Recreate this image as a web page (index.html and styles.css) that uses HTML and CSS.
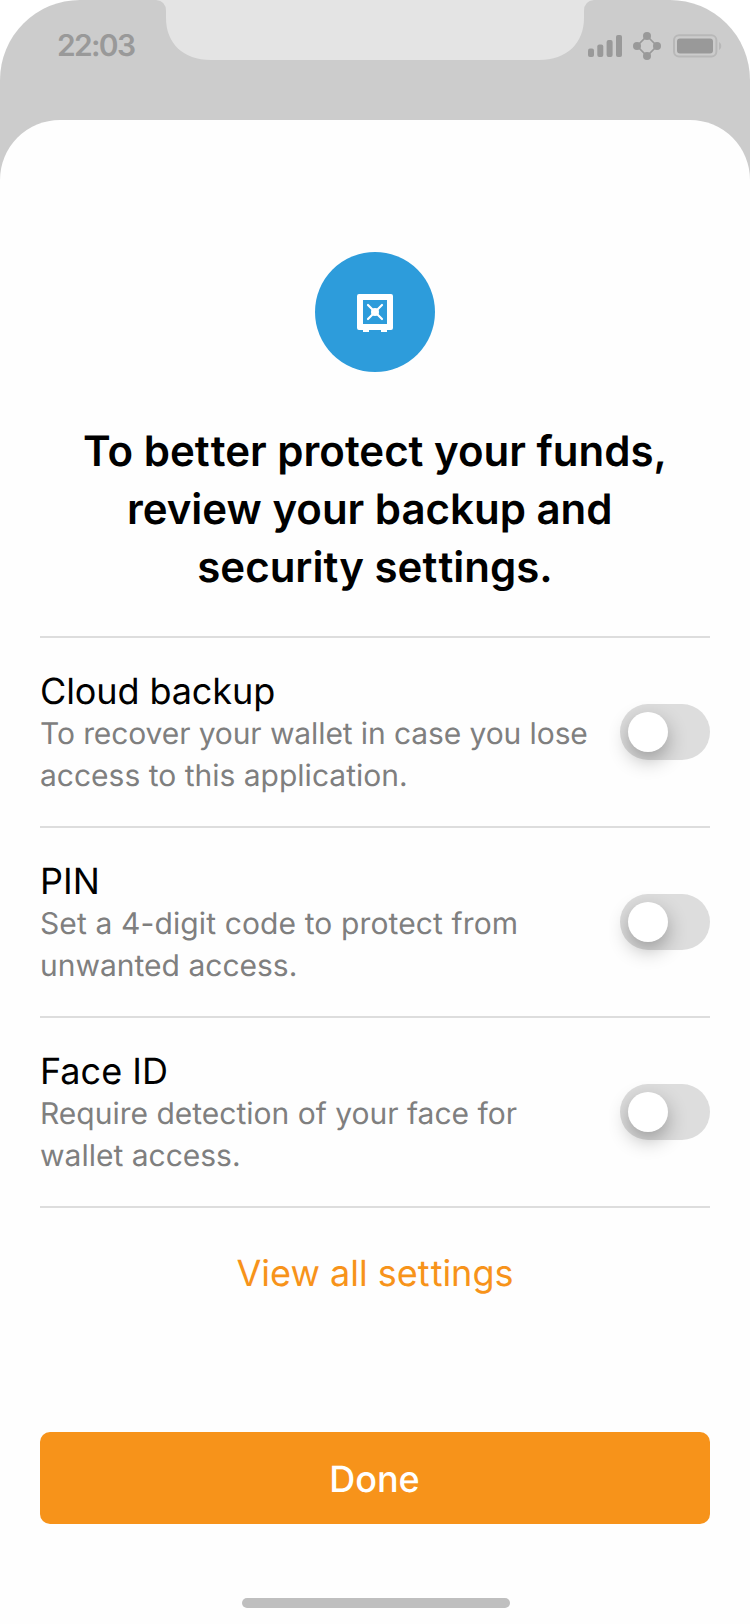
FILE: index.html
```html
<!DOCTYPE html>
<html lang="en">
<head>
<meta charset="utf-8">
<title>Security settings</title>
<link rel="stylesheet" href="styles.css">
</head>
<body>
<div class="phone">
  <header class="status">
    <svg class="notch" width="438" height="60" viewBox="0 0 438 60"><path d="M0 0H438Q428 1 428 11V18C428 43 411 60 383 60H55C27 60 10 43 10 18V11Q10 1 0 0Z"/></svg>
    <span class="time">22:03</span>
    <div class="indicators">
      <svg class="signal" width="34" height="22" viewBox="0 0 34 22"><rect x="0" y="13.5" width="6" height="8.5" rx="2"/><rect x="9.3" y="9.5" width="6" height="12.5" rx="2"/><rect x="18.6" y="5" width="6" height="17" rx="2"/><rect x="28" y="0" width="6" height="22" rx="2"/></svg>
      <svg class="mesh" width="28" height="28" viewBox="0 0 28 28"><path d="M14 4L24 14L14 24L4 14Z"/><circle cx="14" cy="4" r="4"/><circle cx="24" cy="14" r="4"/><circle cx="14" cy="24" r="4"/><circle cx="4" cy="14" r="4"/></svg>
      <svg class="battery" width="49" height="24" viewBox="0 0 49 24"><rect class="case" x="1" y="1.2" width="42.4" height="21.2" rx="5"/><rect x="4" y="4.5" width="36" height="15" rx="3"/><path class="tip" d="M46 8C49 9.500 49 14.500 46 16Z"/></svg>
    </div>
  </header>
  <main class="sheet">
    <div class="badge">
      <svg width="36" height="38" viewBox="0 0 36 38"><path fill-rule="evenodd" d="M2 0H34Q36 0 36 2V34Q36 36 34 36H30V38H24V36H12V38H6V36H2Q0 36 0 34V2Q0 0 2 0ZM6 6V30H30V6Z"/><circle cx="18" cy="18" r="4"/><path class="spokes" d="M11 11L25 25M25 11L11 25"/></svg>
    </div>
    <h1 class="heading">To be<span class="loose">t</span>ter protect your funds,<br>review your backup and&nbsp;<br>security se<span class="loose">t</span>tings.</h1>
    <ul class="settings">
      <li class="setting">
        <div class="text"><h2 class="name tight">Cloud backup</h2><p class="detail"><span class="tight">To recover your wallet in case you lose</span><br>access to this application.</p></div>
        <span class="toggle"><span class="knob"></span></span>
      </li>
      <li class="setting">
        <div class="text"><h2 class="name">PIN</h2><p class="detail"><span class="wide">Set a 4-digit code to protect from</span><br>unwanted access.</p></div>
        <span class="toggle"><span class="knob"></span></span>
      </li>
      <li class="setting">
        <div class="text"><h2 class="name">Face ID</h2><p class="detail">Require detection of your face for<br>wallet access.</p></div>
        <span class="toggle"><span class="knob"></span></span>
      </li>
    </ul>
    <a class="link">View all se<span class="loose">t</span>tings</a>
    <button class="done">Done</button>
    <div class="home"></div>
  </main>
</div>
</body>
</html>
```
FILE: styles.css
```css
* { box-sizing: border-box; margin: 0; padding: 0; }
body { background: #fff; font-family: Inter, "Liberation Sans", sans-serif; text-rendering: geometricPrecision; }
.phone { width: 750px; height: 1624px; background: linear-gradient(#ccc 300px, #fff 300px); border-radius: 80px 80px 0 0; overflow: hidden; }
.status { position: relative; height: 120px; padding: 32px 28px 0 57px; display: flex; justify-content: space-between; align-items: flex-start; }
.notch { position: absolute; top: 0; left: 156px; fill: #e4e4e4; }
.time { font-size: 30px; line-height: 29px; font-weight: 600; color: #999; letter-spacing: -1.7px; }
.indicators { display: flex; align-items: center; fill: #999; }
.mesh { margin-left: 11px; }
.mesh path { fill: none; stroke: #999; stroke-width: 1.6; }
.battery { margin-left: 12px; }
.signal { display: block; }
.case { fill: none; stroke: #b8b8b8; stroke-width: 2; }
.tip { fill: #b8b8b8; }
.sheet { height: 1504px; padding: 132px 40px 0; background: #fefefe; border-radius: 60px 60px 0 0; display: flex; flex-direction: column; }
.badge { width: 120px; height: 120px; padding-top: 2px; border-radius: 50%; background: #2d9cdb; align-self: center; display: flex; align-items: center; justify-content: center; fill: #fff; }
.spokes { stroke: #fff; stroke-width: 2.2; stroke-linecap: round; }
.heading { margin-top: 51px; font-size: 42px; line-height: 58px; font-weight: 600; text-align: center; white-space: nowrap; }
.loose { letter-spacing: 0.03em; }
.tight { letter-spacing: -0.1px; }
.wide { letter-spacing: 0.12px; }
.settings { margin-top: 39px; list-style: none; border-top: 2px solid #ddd; }
.setting { height: 190px; padding-top: 32px; border-bottom: 2px solid #ddd; display: flex; justify-content: space-between; }
.text { white-space: nowrap; }
.name { font-size: 36px; line-height: 42px; font-weight: 400; }
.detail { padding-top: 1px; font-size: 30px; line-height: 42px; color: #7f7f7f; }
.toggle { width: 90px; height: 56px; margin-top: 34px; padding: 8px; border-radius: 28px; background: #ddd; }
.knob { display: block; width: 40px; height: 40px; border-radius: 50%; background: #fff; box-shadow: 0 8px 20px rgba(0,0,0,.3); }
.link { margin-top: 43px; font-size: 36px; line-height: 44px; text-align: center; color: #f7931a; }
.done { margin-top: 137px; height: 92px; padding: 2px 1px 0 0; border: 0; border-radius: 10px; background: #f7931a; color: #fff; font: 500 36px/44px Inter, sans-serif; text-rendering: geometricPrecision; }
.home { width: 268px; height: 10px; margin-top: 74px; margin-left: 202px; border-radius: 5px; background: #bfbfbf; }
```
